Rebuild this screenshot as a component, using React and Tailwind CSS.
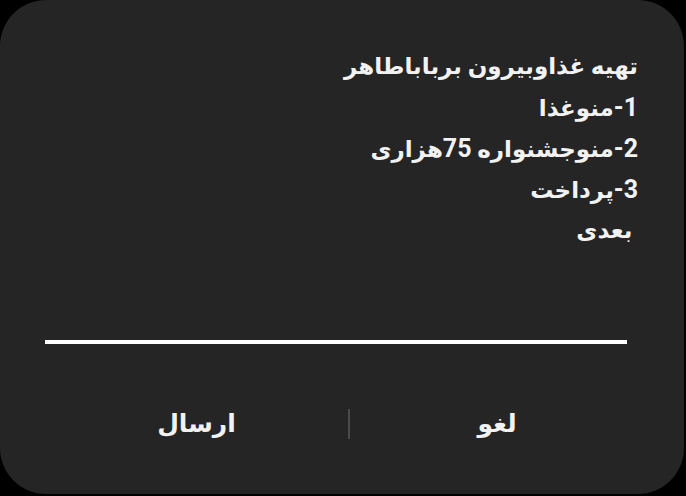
import React from "react";

// each line: [text, isPersian]
const lines = [
  [["تهیه غذاوبیرون برباباطاهر", true]],
  [["1-", false], ["منوغذا", true]],
  [["2-", false], ["منوجشنواره ", true], ["75", false], ["هزاری", true]],
  [["3-", false], ["پرداخت", true]],
  [["\u00A0بعدی", true]],
];

export default function App() {
  return (
    <div className="w-[686px] h-[496px] bg-black font-['Roboto','DejaVu_Sans',sans-serif]">
      <div className="w-[684px] h-[494px] bg-[#252525] rounded-[46px] flex flex-col">
        {/* Message body */}
        <div dir="rtl" className="pt-[46px] pr-[46px] leading-[41px] text-[#f2f2f2]">
          {lines.map((line, i) => (
            <div key={i} className="h-[41px]">
              {line.map(([t, fa], j) => (
                <span key={j} className={fa ? "text-[23px] font-bold" : "text-[25px] font-bold"}>
                  {t}
                </span>
              ))}
            </div>
          ))}
        </div>

        {/* Divider line */}
        <div className="mt-[89px] ml-[45px] w-[582px] h-[4px] bg-white" />

        {/* Actions */}
        <div className="mt-[50px] ml-[45px] flex items-center h-[60px] text-[25px] font-bold text-[#f2f2f2]">
          <button className="w-[303px] text-center">ارسال</button>
          <div className="w-[2px] h-[30px] bg-[#4a4a4a]" />
          <button className="w-[294px] text-center">لغو</button>
        </div>
      </div>
    </div>
  );
}
